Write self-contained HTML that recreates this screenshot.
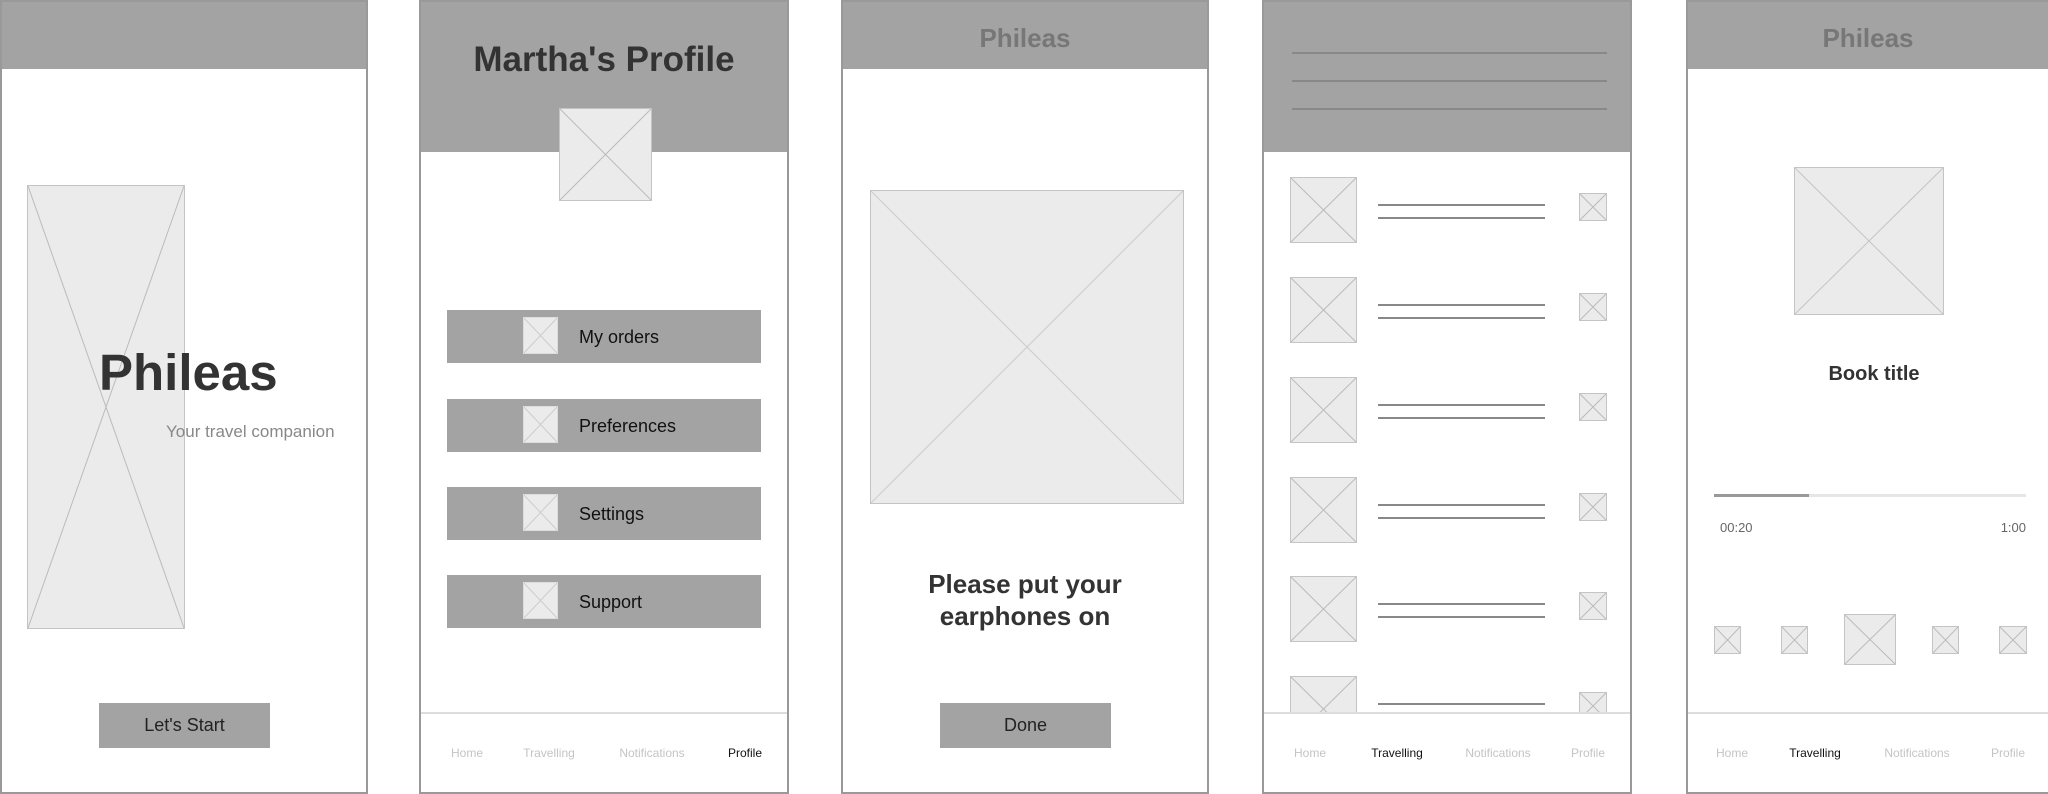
<!DOCTYPE html>
<html><head><meta charset="utf-8"><style>
*{margin:0;padding:0;box-sizing:border-box}
body{width:2048px;height:794px;background:#fff;position:relative;overflow:hidden;font-family:"Liberation Sans",Arial,sans-serif}
.a{position:absolute}
.panel{position:absolute;top:0;height:794px;border:2px solid #999;background:#fff;overflow:hidden}
.hdr{position:absolute;left:0;right:0;top:0;background:#a3a3a3}
.ph{position:absolute;background:#ebebeb;border:1px solid #c4c4c4}
.ph svg{position:absolute;left:0;top:0;width:100%;height:100%}
.btn{position:absolute;background:#a3a3a3;color:#222;font-size:18px;display:flex;align-items:center;justify-content:center}
.tabs{position:absolute;left:0;right:0;top:710px;height:84px;border-top:2px solid #ddd;background:#fff}
.tab{position:absolute;top:32px;font-size:12px;color:#c4c4c4;transform:translateX(-50%);white-space:nowrap}
.tab.on{color:#111}
.menu{position:absolute;left:26px;width:314px;height:53px;background:#a3a3a3}
.menu .ph{left:76px;top:7px;width:35px;height:37px;border-color:#ddd}
.menu span{position:absolute;left:132px;top:17px;font-size:18px;color:#111}
.ln{position:absolute;height:2px;background:#888}
</style></head><body>

<!-- Panel 1 -->
<div class="panel" style="left:0;width:368px">
  <div class="hdr" style="height:67px"></div>
  <div class="ph" style="left:25px;top:183px;width:158px;height:444px"><svg viewBox="0 0 100 100" preserveAspectRatio="none"><line x1="0" y1="0" x2="100" y2="100" stroke="#bbb" stroke-width="1" vector-effect="non-scaling-stroke"/><line x1="100" y1="0" x2="0" y2="100" stroke="#bbb" stroke-width="1" vector-effect="non-scaling-stroke"/></svg></div>
  <div class="a" style="left:97px;top:341px;font-size:51px;font-weight:bold;color:#333;line-height:60px">Phileas</div>
  <div class="a" style="left:164px;top:420px;font-size:17px;color:#888">Your travel companion</div>
  <div class="btn" style="left:97px;top:701px;width:171px;height:45px">Let's Start</div>
</div>

<!-- Panel 2 -->
<div class="panel" style="left:419px;width:370px">
  <div class="hdr" style="height:150px"></div>
  <div class="a" style="left:0;right:0;top:38px;text-align:center;font-size:35px;font-weight:bold;color:#333">Martha's Profile</div>
  <div class="ph" style="left:138px;top:106px;width:93px;height:93px"><svg viewBox="0 0 100 100" preserveAspectRatio="none"><line x1="0" y1="0" x2="100" y2="100" stroke="#bbb" vector-effect="non-scaling-stroke"/><line x1="100" y1="0" x2="0" y2="100" stroke="#bbb" vector-effect="non-scaling-stroke"/></svg></div>
  <div class="menu" style="top:308px"><div class="ph"><svg viewBox="0 0 100 100" preserveAspectRatio="none"><line x1="0" y1="0" x2="100" y2="100" stroke="#ccc" vector-effect="non-scaling-stroke"/><line x1="100" y1="0" x2="0" y2="100" stroke="#ccc" vector-effect="non-scaling-stroke"/></svg></div><span>My orders</span></div>
  <div class="menu" style="top:397px"><div class="ph"><svg viewBox="0 0 100 100" preserveAspectRatio="none"><line x1="0" y1="0" x2="100" y2="100" stroke="#ccc" vector-effect="non-scaling-stroke"/><line x1="100" y1="0" x2="0" y2="100" stroke="#ccc" vector-effect="non-scaling-stroke"/></svg></div><span>Preferences</span></div>
  <div class="menu" style="top:485px"><div class="ph"><svg viewBox="0 0 100 100" preserveAspectRatio="none"><line x1="0" y1="0" x2="100" y2="100" stroke="#ccc" vector-effect="non-scaling-stroke"/><line x1="100" y1="0" x2="0" y2="100" stroke="#ccc" vector-effect="non-scaling-stroke"/></svg></div><span>Settings</span></div>
  <div class="menu" style="top:573px"><div class="ph"><svg viewBox="0 0 100 100" preserveAspectRatio="none"><line x1="0" y1="0" x2="100" y2="100" stroke="#ccc" vector-effect="non-scaling-stroke"/><line x1="100" y1="0" x2="0" y2="100" stroke="#ccc" vector-effect="non-scaling-stroke"/></svg></div><span>Support</span></div>
  <div class="tabs"><div class="tab" style="left:46px">Home</div><div class="tab" style="left:128px">Travelling</div><div class="tab" style="left:231px">Notifications</div><div class="tab on" style="left:324px">Profile</div></div>
</div>

<!-- Panel 3 -->
<div class="panel" style="left:841px;width:368px">
  <div class="hdr" style="height:67px"></div>
  <div class="a" style="left:0;right:0;top:21px;text-align:center;font-size:26px;font-weight:bold;color:#777">Phileas</div>
  <div class="ph" style="left:27px;top:188px;width:314px;height:314px"><svg viewBox="0 0 100 100" preserveAspectRatio="none"><line x1="0" y1="0" x2="100" y2="100" stroke="#ccc" vector-effect="non-scaling-stroke"/><line x1="100" y1="0" x2="0" y2="100" stroke="#ccc" vector-effect="non-scaling-stroke"/></svg></div>
  <div class="a" style="left:0;right:0;top:566px;text-align:center;font-size:26px;font-weight:bold;color:#333;line-height:32px">Please put your<br>earphones on</div>
  <div class="btn" style="left:97px;top:701px;width:171px;height:45px">Done</div>
</div>

<!-- Panel 4 -->
<div class="panel" style="left:1262px;width:370px">
  <div class="hdr" style="height:150px"></div>
  <div class="ln" style="left:28px;width:315px;top:50px"></div>
  <div class="ln" style="left:28px;width:315px;top:78px"></div>
  <div class="ln" style="left:28px;width:315px;top:106px"></div>
  <div id="rows"></div>
  <div class="tabs"><div class="tab" style="left:46px">Home</div><div class="tab on" style="left:133px">Travelling</div><div class="tab" style="left:234px">Notifications</div><div class="tab" style="left:324px">Profile</div></div>
</div>

<!-- Panel 5 -->
<div class="panel" style="left:1686px;width:370px">
  <div class="hdr" style="height:67px"></div>
  <div class="a" style="left:0;width:360px;top:21px;text-align:center;font-size:26px;font-weight:bold;color:#777">Phileas</div>
  <div class="ph" style="left:106px;top:165px;width:150px;height:148px"><svg viewBox="0 0 100 100" preserveAspectRatio="none"><line x1="0" y1="0" x2="100" y2="100" stroke="#c4c4c4" vector-effect="non-scaling-stroke"/><line x1="100" y1="0" x2="0" y2="100" stroke="#c4c4c4" vector-effect="non-scaling-stroke"/></svg></div>
  <div class="a" style="left:0;width:372px;top:361px;text-align:center;font-size:20px;font-weight:bold;color:#333">Book title</div>
  <div class="a" style="left:26px;top:492px;width:312px;height:3px;background:#e6e6e6"></div>
  <div class="a" style="left:26px;top:492px;width:95px;height:3px;background:#999"></div>
  <div class="a" style="left:32px;top:518px;font-size:13px;color:#666">00:20</div>
  <div class="a" style="left:300px;top:518px;font-size:13px;color:#666;width:38px;text-align:right">1:00</div>
  <div class="ph" style="left:26px;top:624px;width:27px;height:28px"><svg viewBox="0 0 100 100" preserveAspectRatio="none"><line x1="0" y1="0" x2="100" y2="100" stroke="#bbb" vector-effect="non-scaling-stroke"/><line x1="100" y1="0" x2="0" y2="100" stroke="#bbb" vector-effect="non-scaling-stroke"/></svg></div>
  <div class="ph" style="left:93px;top:624px;width:27px;height:28px"><svg viewBox="0 0 100 100" preserveAspectRatio="none"><line x1="0" y1="0" x2="100" y2="100" stroke="#bbb" vector-effect="non-scaling-stroke"/><line x1="100" y1="0" x2="0" y2="100" stroke="#bbb" vector-effect="non-scaling-stroke"/></svg></div>
  <div class="ph" style="left:156px;top:612px;width:52px;height:51px"><svg viewBox="0 0 100 100" preserveAspectRatio="none"><line x1="0" y1="0" x2="100" y2="100" stroke="#bbb" vector-effect="non-scaling-stroke"/><line x1="100" y1="0" x2="0" y2="100" stroke="#bbb" vector-effect="non-scaling-stroke"/></svg></div>
  <div class="ph" style="left:244px;top:624px;width:27px;height:28px"><svg viewBox="0 0 100 100" preserveAspectRatio="none"><line x1="0" y1="0" x2="100" y2="100" stroke="#bbb" vector-effect="non-scaling-stroke"/><line x1="100" y1="0" x2="0" y2="100" stroke="#bbb" vector-effect="non-scaling-stroke"/></svg></div>
  <div class="ph" style="left:311px;top:624px;width:28px;height:28px"><svg viewBox="0 0 100 100" preserveAspectRatio="none"><line x1="0" y1="0" x2="100" y2="100" stroke="#bbb" vector-effect="non-scaling-stroke"/><line x1="100" y1="0" x2="0" y2="100" stroke="#bbb" vector-effect="non-scaling-stroke"/></svg></div>
  <div class="tabs"><div class="tab" style="left:44px">Home</div><div class="tab on" style="left:127px">Travelling</div><div class="tab" style="left:229px">Notifications</div><div class="tab" style="left:320px">Profile</div></div>
</div>

<script>
var X='<svg viewBox="0 0 100 100" preserveAspectRatio="none"><line x1="0" y1="0" x2="100" y2="100" stroke="#bbb" vector-effect="non-scaling-stroke"/><line x1="100" y1="0" x2="0" y2="100" stroke="#bbb" vector-effect="non-scaling-stroke"/></svg>';
var h='',tops=[175,275,375,475,574,674];
tops.forEach(function(t){
 h+='<div class="ph" style="left:26px;top:'+t+'px;width:67px;height:66px">'+X+'</div>';
 h+='<div class="ln" style="left:114px;width:167px;top:'+(t+27)+'px"></div>';
 h+='<div class="ln" style="left:114px;width:167px;top:'+(t+40)+'px"></div>';
 h+='<div class="ph" style="left:315px;top:'+(t+16)+'px;width:28px;height:28px">'+X+'</div>';
});
document.getElementById('rows').innerHTML=h;
</script>
</body></html>
